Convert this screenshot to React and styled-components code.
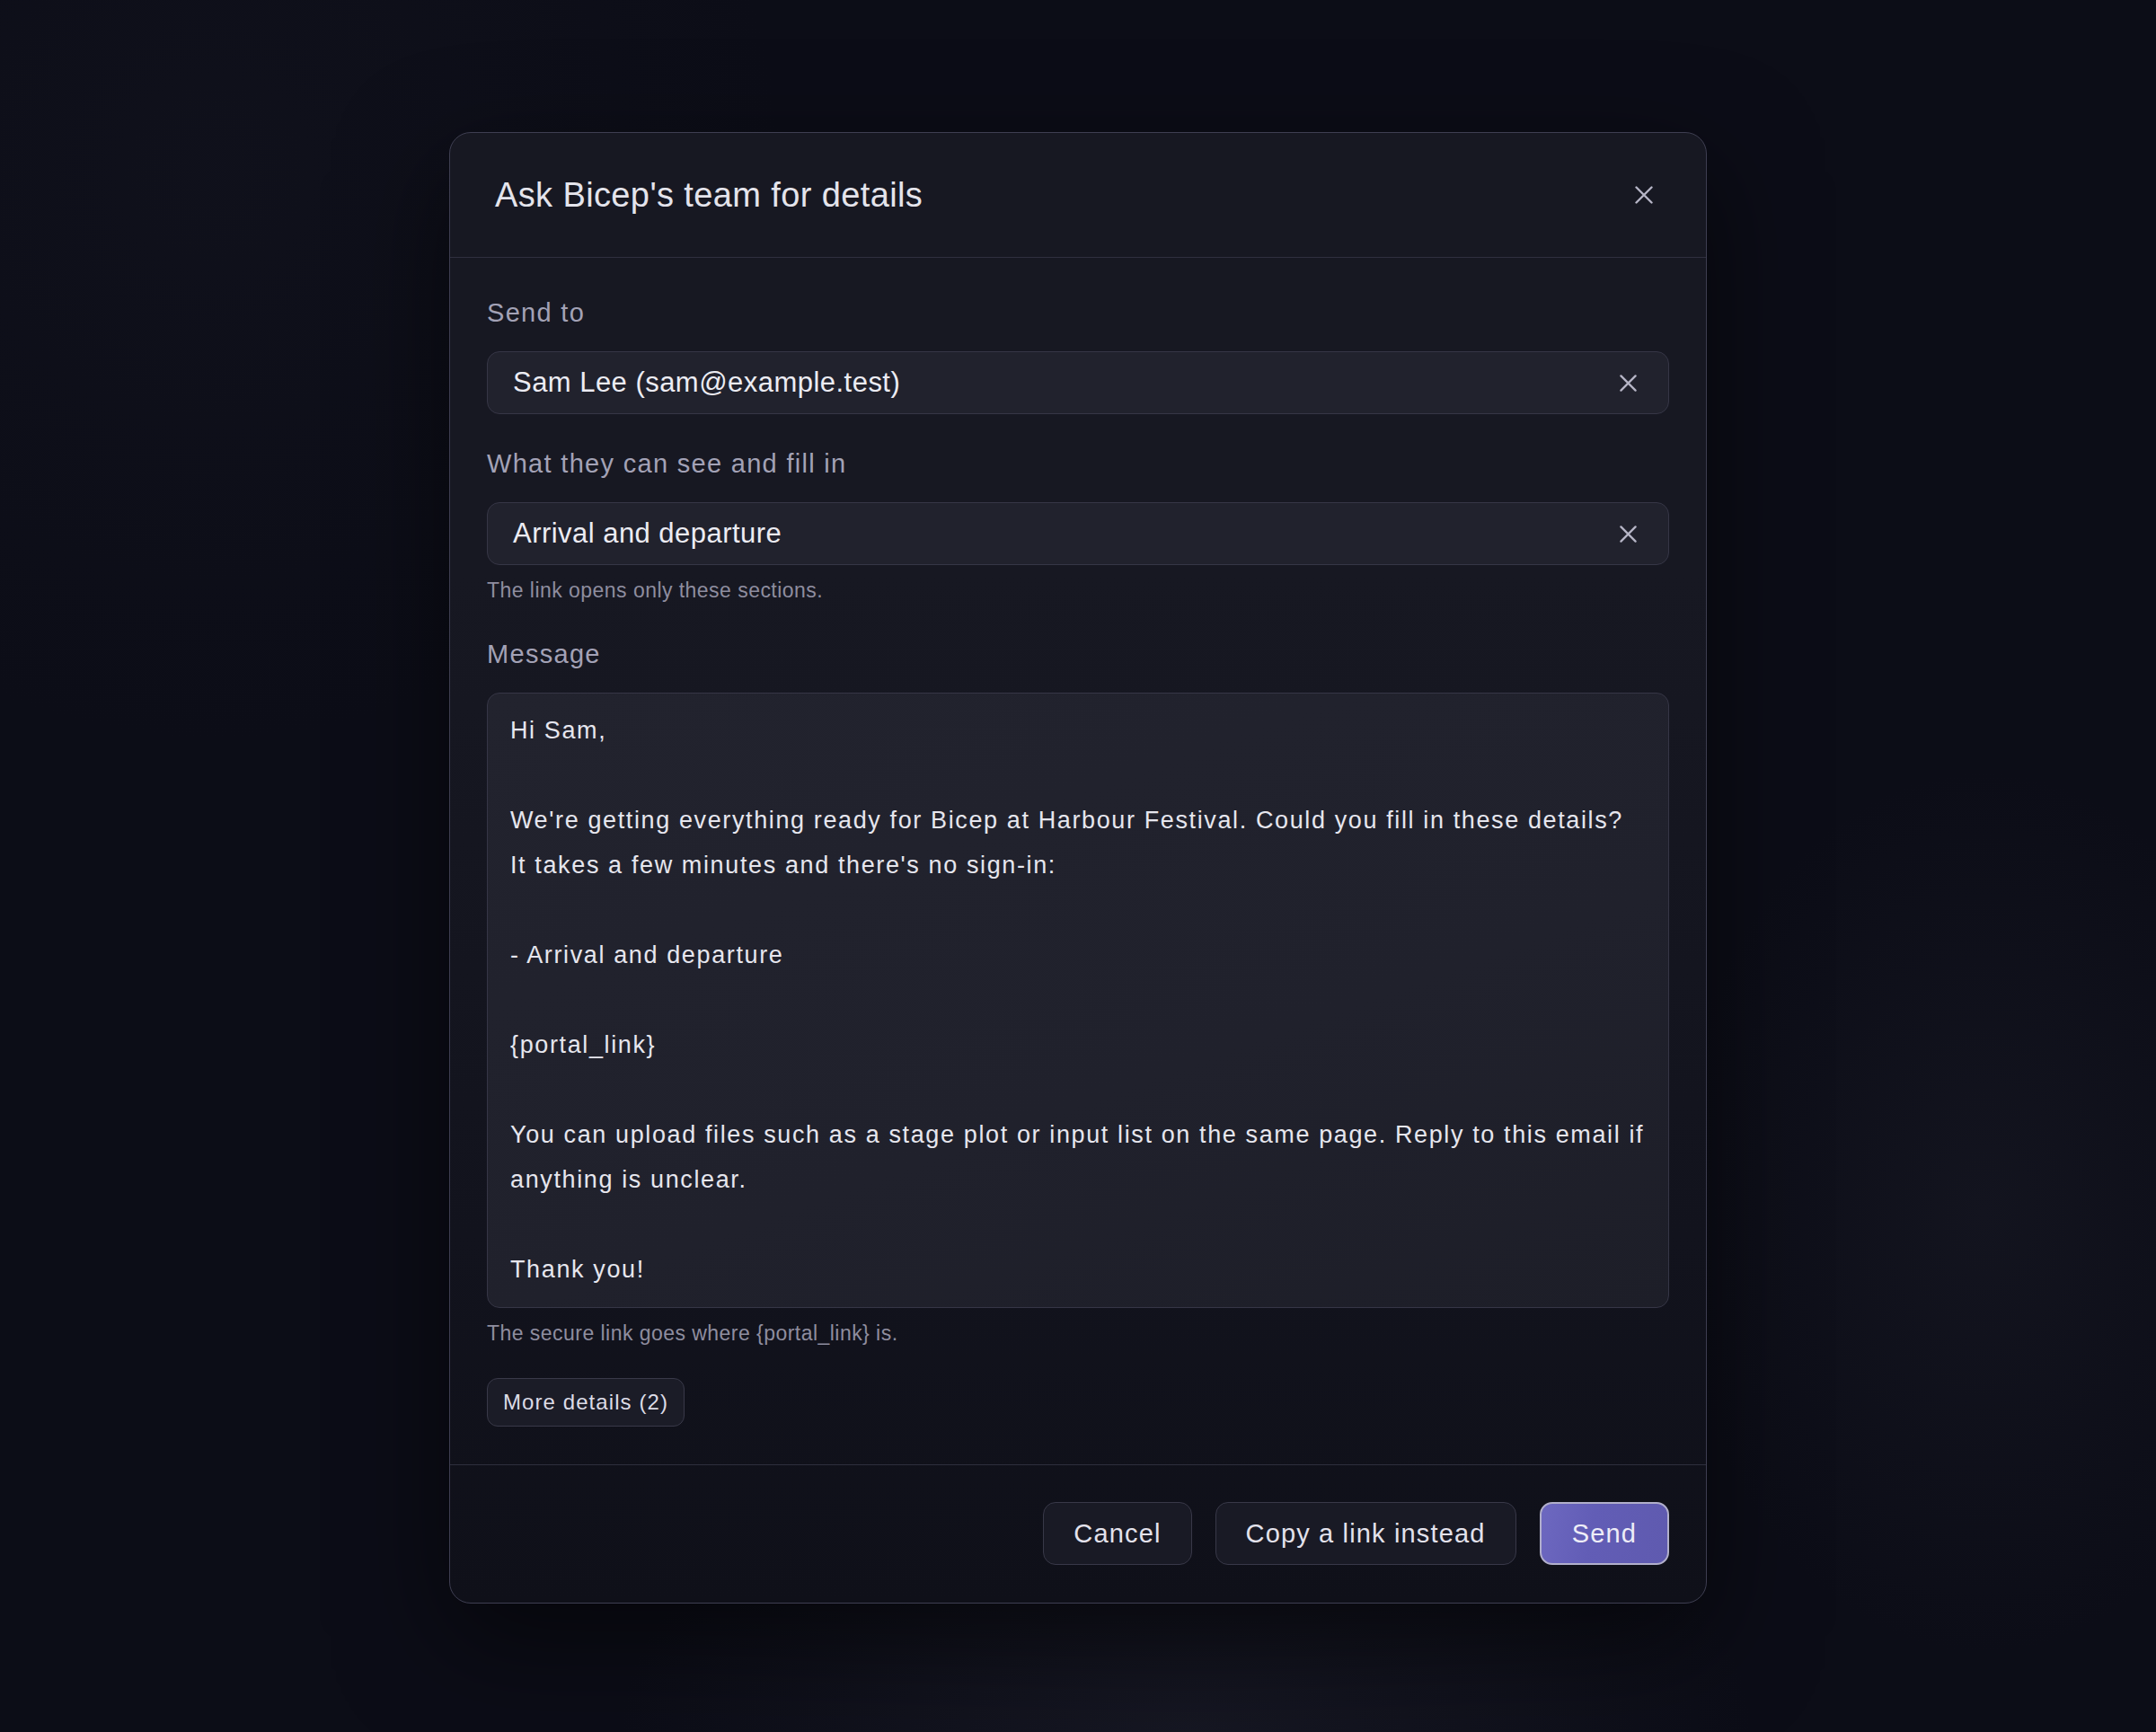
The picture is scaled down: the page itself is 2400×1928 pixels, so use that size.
import React from "react";
import styled, { createGlobalStyle } from "styled-components";

const GlobalStyle = createGlobalStyle`
  html, body {
    margin: 0;
    padding: 0;
    background: #0d0e18;
  }
  body {
    font-family: "Liberation Sans", Arial, sans-serif;
    -webkit-font-smoothing: antialiased;
  }
  * { box-sizing: border-box; }
`;

const Page = styled.div`
  min-height: 100vh;
  display: flex;
  align-items: center;
  justify-content: center;
  background:
    radial-gradient(ellipse 900px 500px at 55% 100%, rgba(30, 31, 44, 0.55), transparent 70%),
    radial-gradient(ellipse 500px 700px at 92% 70%, rgba(22, 23, 34, 0.7), transparent 70%),
    radial-gradient(ellipse 900px 900px at 10% 10%, rgba(18, 19, 30, 0.6), transparent 70%),
    #0c0d17;
`;

const Dialog = styled.section`
  width: 1400px;
  margin-top: 4px;
  border: 1px solid #3e3e51;
  border-radius: 24px;
  overflow: hidden;
  background: linear-gradient(180deg, #171822 0%, #171822 30%, #12131d 75%, #0f1019 100%);
  box-shadow: 0 40px 120px rgba(0, 0, 0, 0.55);
  display: flex;
  flex-direction: column;
`;

const Header = styled.header`
  height: 139px;
  padding: 0 49px 0 50px;
  border-bottom: 1px solid #2f2f3f;
  display: flex;
  align-items: center;
  justify-content: space-between;
`;

const Title = styled.h2`
  margin: 0;
  font-size: 38px;
  font-weight: 400;
  letter-spacing: 0.01em;
  color: #e4e4ec;
`;

const IconButton = styled.button`
  width: ${(p) => p.$size}px;
  height: ${(p) => p.$size}px;
  padding: 0;
  border: 0;
  background: transparent;
  color: #b6b5c6;
  display: flex;
  align-items: center;
  justify-content: center;
  cursor: pointer;
  flex-shrink: 0;
`;

const Body = styled.div`
  padding: 42px 41px 42px;
  display: flex;
  flex-direction: column;
  gap: 36px;
`;

const Field = styled.div`
  display: flex;
  flex-direction: column;
`;

const Label = styled.label`
  font-size: 29px;
  line-height: 39px;
  letter-spacing: 0.045em;
  color: #a3a2b6;
  margin-bottom: 23px;
`;

const SelectBox = styled.div`
  height: 70px;
  padding: 0 35px 0 28px;
  border: 1px solid #363646;
  border-radius: 14px;
  background: #21222d;
  display: flex;
  align-items: center;
  justify-content: space-between;
`;

const SelectValue = styled.span`
  font-size: 31px;
  letter-spacing: 0.015em;
  color: #ececf3;
`;

const Help = styled.p`
  margin: 13px 0 0;
  font-size: 23px;
  line-height: 31px;
  letter-spacing: 0.02em;
  color: #8e8d9f;
`;

const MessageBox = styled.div`
  border: 1px solid #363646;
  border-radius: 14px;
  background: linear-gradient(160deg, #22232e 0%, #20212c 60%, #1d1e28 100%);
  padding: 16px 25px 17px;
  font-size: 27px;
  line-height: 50px;
  letter-spacing: 0.06em;
  color: #e6e6ee;
  white-space: pre;
  overflow: hidden;
`;

const ChipButton = styled.button`
  align-self: flex-start;
  margin-top: -2px;
  height: 54px;
  padding: 0 17px;
  border: 1px solid #393949;
  border-radius: 12px;
  background: #1b1c27;
  font-family: inherit;
  font-size: 24px;
  letter-spacing: 0.045em;
  color: #dcdbe6;
  cursor: pointer;
`;

const Footer = styled.footer`
  border-top: 1px solid #2e2e3c;
  padding: 41px 41px 42px 41px;
  display: flex;
  justify-content: flex-end;
  gap: 26px;
`;

const ActionButton = styled.button`
  height: 70px;
  padding: 0 ${(p) => (p.$primary ? 34 : 33)}px;
  border-radius: 14px;
  border: ${(p) => (p.$primary ? "2px solid #b1afcb" : "1px solid #383848")};
  background: ${(p) =>
    p.$primary
      ? "linear-gradient(100deg, #6d68c0 0%, #625db6 40%, #5f5aaf 100%)"
      : "#191a25"};
  font-family: inherit;
  font-size: 29px;
  letter-spacing: 0.04em;
  color: ${(p) => (p.$primary ? "#eeedf7" : "#e3e2ec")};
  cursor: pointer;
`;

function XIcon({ size = 20, stroke = 2.4 }) {
  return (
    <svg width={size} height={size} viewBox="0 0 20 20" fill="none">
      <path
        d="M1.5 1.5 L18.5 18.5 M18.5 1.5 L1.5 18.5"
        stroke="currentColor"
        strokeWidth={stroke}
        strokeLinecap="round"
      />
    </svg>
  );
}

const message = [
  "Hi Sam,",
  "",
  "We're getting everything ready for Bicep at Harbour Festival. Could you fill in these details?",
  "It takes a few minutes and there's no sign-in:",
  "",
  "- Arrival and departure",
  "",
  "{portal_link}",
  "",
  "You can upload files such as a stage plot or input list on the same page. Reply to this email if",
  "anything is unclear.",
  "",
  "Thank you!",
].join("\n");

export default function App() {
  return (
    <>
      <GlobalStyle />
      <Page>
        <Dialog role="dialog" aria-label="Ask Bicep's team for details">
          <Header>
            <Title>Ask Bicep's team for details</Title>
            <IconButton $size={40} aria-label="Close">
              <XIcon size={20} />
            </IconButton>
          </Header>

          <Body>
            <Field>
              <Label>Send to</Label>
              <SelectBox>
                <SelectValue>Sam Lee (sam@example.test)</SelectValue>
                <IconButton $size={20} aria-label="Remove recipient">
                  <XIcon size={19} />
                </IconButton>
              </SelectBox>
            </Field>

            <Field>
              <Label>What they can see and fill in</Label>
              <SelectBox>
                <SelectValue>Arrival and departure</SelectValue>
                <IconButton $size={20} aria-label="Remove section">
                  <XIcon size={19} />
                </IconButton>
              </SelectBox>
              <Help>The link opens only these sections.</Help>
            </Field>

            <Field>
              <Label>Message</Label>
              <MessageBox>{message}</MessageBox>
              <Help>The secure link goes where {"{portal_link}"} is.</Help>
            </Field>

            <ChipButton>More details (2)</ChipButton>
          </Body>

          <Footer>
            <ActionButton>Cancel</ActionButton>
            <ActionButton>Copy a link instead</ActionButton>
            <ActionButton $primary>Send</ActionButton>
          </Footer>
        </Dialog>
      </Page>
    </>
  );
}
